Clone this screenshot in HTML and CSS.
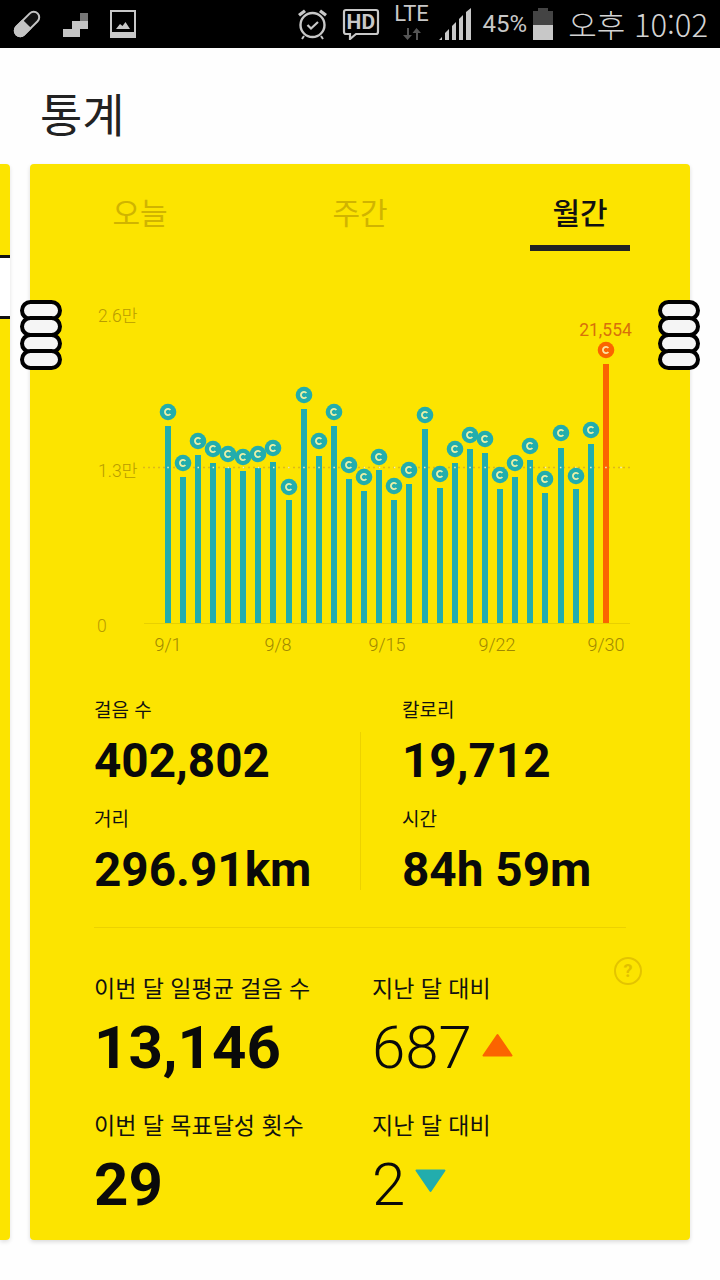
FILE: index.html
```html
<!DOCTYPE html>
<html lang="ko">
<head>
<meta charset="utf-8">
<title>통계</title>
<link rel="stylesheet" href="styles.css">
</head>
<body>
<div class="screen">
  <div class="status">
    <div class="status-left">
      <svg class="ic-pill" viewBox="0 0 28 28"><g transform="rotate(-45 14 14)"><rect x="-1" y="8.5" width="30" height="11" rx="5.5" fill="#111" stroke="#c4c4c4" stroke-width="2"/><path d="M14 7.5H4.500A6.500 6.500 0 0 0 4.500 20.500H14Z" fill="#c4c4c4"/></g></svg>
      <svg class="ic-steps" viewBox="0 0 25 24"><path d="M17 0h8v8h-8z" fill="#777"/><path d="M9 8h16v8H17v8H0v-8h9z" fill="#c4c4c4"/></svg>
      <svg class="ic-pic" viewBox="0 0 26 28"><rect x="1" y="1" width="24" height="26" fill="none" stroke="#c8c8c8" stroke-width="2"/><rect x="1" y="22" width="24" height="5" fill="#c8c8c8"/><path d="M6 19l4-5 2.500 2 3-4 4.500 7z" fill="#c8c8c8"/></svg>
    </div>
    <div class="status-right">
      <svg class="ic-alarm" viewBox="0 0 31 32"><circle cx="15.500" cy="17" r="12" fill="none" stroke="#c8c8c8" stroke-width="2.400"/><path d="M10.500 17l3.500 3.500 7-6.500" fill="none" stroke="#c8c8c8" stroke-width="2.200"/><path d="M1 6l6-4.500 2 2.500-6 4.500zM30 6l-6-4.500-2 2.500 6 4.500z" fill="#c8c8c8"/><path d="M7 28l-2 3M24 28l2 3" stroke="#c8c8c8" stroke-width="2"/></svg>
      <span class="ic-hd"><svg class="hd-shape" viewBox="0 0 38 32"><path d="M4 2h30a2 2 0 0 1 2 2v20a2 2 0 0 1-2 2H14l-6 5v-5H4a2 2 0 0 1-2-2V4a2 2 0 0 1 2-2z" fill="none" stroke="#c8c8c8" stroke-width="2.200"/></svg><span class="hd-text">HD</span></span>
      <span class="ic-lte"><span class="lte-text">LTE</span><svg class="lte-arrows" viewBox="0 0 18 12"><path d="M4 12V5H0l4.500-5L9 5H6v7z" transform="matrix(1 0 0 -1 0 12)" fill="#555"/><path d="M13 12V5H9.500L13.500 0 18 5h-3v7z" fill="#555"/></svg></span>
      <svg class="ic-signal" viewBox="0 0 32 32"><path d="M0 32L3 29V32zM6 32V25L10 21V32zM13 32V18L17 14V32zM20 32V11L24 7V32zM27 32V4L32 0V32z" fill="#c8c8c8"/></svg>
      <span class="pct">45%</span>
      <svg class="ic-batt" viewBox="0 0 20 32"><path d="M5 0h10v3h5v14H0V3h5z" fill="#444"/><path d="M0 17h20v15H0z" fill="#c8c8c8"/></svg>
      <span class="clock">오후 10:02</span>
    </div>
  </div>

  <h1 class="title">통계</h1>

  <div class="carousel">
    <div class="peek">
      <div class="peek-top"></div>
      <div class="peek-mid"></div>
      <div class="peek-bottom"></div>
    </div>
    <section class="card">
      <div class="tabs">
        <div class="tab">오늘</div>
        <div class="tab">주간</div>
        <div class="tab tab-on">월간<span class="tab-bar"></span></div>
      </div>

      <svg class="chart" viewBox="30 290 660 370" width="660" height="370">
        <defs>
          <g id="coin"><circle r="8.300" fill="#22adad"/><path d="M2.400-2A3.100 3.100 0 1 0 2.400 2" fill="none" stroke="#e9f0a8" stroke-width="1.800"/></g>
          <g id="coin-hot"><circle r="8.300" fill="#fb6400"/><path d="M2.400-2A3.100 3.100 0 1 0 2.400 2" fill="none" stroke="#fbe3a0" stroke-width="1.800"/></g>
        </defs>
        <text class="axis" x="98" y="322">2.6만</text>
        <text class="axis" x="98" y="477">1.3만</text>
        <text class="axis" x="97" y="632">0</text>
        <line class="base" x1="144" y1="623.500" x2="630" y2="623.500"/>
        <line class="avg" x1="143" y1="467.500" x2="632" y2="467.500"/>
        <g class="bars">
          <rect x="165" y="426" width="6" height="197"/>
          <rect x="180" y="477" width="6" height="146"/>
          <rect x="195" y="455" width="6" height="168"/>
          <rect x="210" y="463" width="6" height="160"/>
          <rect x="225" y="468" width="6" height="155"/>
          <rect x="240" y="471" width="6" height="152"/>
          <rect x="255" y="468" width="6" height="155"/>
          <rect x="270" y="462" width="6" height="161"/>
          <rect x="286" y="500" width="6" height="123"/>
          <rect x="301" y="409" width="6" height="214"/>
          <rect x="316" y="456" width="6" height="167"/>
          <rect x="331" y="426" width="6" height="197"/>
          <rect x="346" y="479" width="6" height="144"/>
          <rect x="361" y="491" width="6" height="132"/>
          <rect x="376" y="470" width="6" height="153"/>
          <rect x="391" y="500" width="6" height="123"/>
          <rect x="406" y="484" width="6" height="139"/>
          <rect x="422" y="429" width="6" height="194"/>
          <rect x="437" y="488" width="6" height="135"/>
          <rect x="452" y="463" width="6" height="160"/>
          <rect x="467" y="449" width="6" height="174"/>
          <rect x="482" y="453" width="6" height="170"/>
          <rect x="497" y="489" width="6" height="134"/>
          <rect x="512" y="477" width="6" height="146"/>
          <rect x="527" y="460" width="6" height="163"/>
          <rect x="542" y="493" width="6" height="130"/>
          <rect x="558" y="448" width="6" height="175"/>
          <rect x="573" y="489" width="6" height="134"/>
          <rect x="588" y="444" width="6" height="179"/>
          <rect class="bar-hot" x="603" y="364" width="6" height="259"/>
        </g>
        <line class="avg-dots" x1="167.300" y1="467.500" x2="632" y2="467.500"/>
        <use href="#coin" x="168" y="412"/>
        <use href="#coin" x="183" y="463"/>
        <use href="#coin" x="198" y="441"/>
        <use href="#coin" x="213" y="449"/>
        <use href="#coin" x="228" y="454"/>
        <use href="#coin" x="243" y="457"/>
        <use href="#coin" x="258" y="454"/>
        <use href="#coin" x="273" y="448"/>
        <use href="#coin" x="289" y="487"/>
        <use href="#coin" x="304" y="395"/>
        <use href="#coin" x="319" y="441"/>
        <use href="#coin" x="334" y="412"/>
        <use href="#coin" x="349" y="465"/>
        <use href="#coin" x="364" y="477"/>
        <use href="#coin" x="379" y="457"/>
        <use href="#coin" x="394" y="486"/>
        <use href="#coin" x="409" y="470"/>
        <use href="#coin" x="425" y="415"/>
        <use href="#coin" x="440" y="474"/>
        <use href="#coin" x="455" y="449"/>
        <use href="#coin" x="470" y="435"/>
        <use href="#coin" x="485" y="439"/>
        <use href="#coin" x="500" y="475"/>
        <use href="#coin" x="515" y="463"/>
        <use href="#coin" x="530" y="446"/>
        <use href="#coin" x="545" y="479"/>
        <use href="#coin" x="561" y="433"/>
        <use href="#coin" x="576" y="476"/>
        <use href="#coin" x="591" y="430"/>
        <use href="#coin-hot" x="606" y="350"/>
        <text class="peak" x="605.500" y="336">21,554</text>
        <text class="date" x="168" y="651">9/1</text>
        <text class="date" x="278" y="651">9/8</text>
        <text class="date" x="387" y="651">9/15</text>
        <text class="date" x="497" y="651">9/22</text>
        <text class="date" x="606" y="651">9/30</text>
      </svg>

      <div class="stats">
        <div class="stat-col">
          <div class="label-sm">걸음 수</div>
          <div class="value-md">402,802</div>
          <div class="label-sm label-next">거리</div>
          <div class="value-md">296.91km</div>
        </div>
        <div class="stat-divider"></div>
        <div class="stat-col stat-col-right">
          <div class="label-sm">칼로리</div>
          <div class="value-md">19,712</div>
          <div class="label-sm label-next">시간</div>
          <div class="value-md">84h 59m</div>
        </div>
      </div>

      <div class="rule"></div>

      <div class="help">?</div>

      <div class="summary">
        <div class="sum-cell">
          <div class="label-lg">이번 달 일평균 걸음 수</div>
          <div class="value-lg">13,146</div>
        </div>
        <div class="sum-cell">
          <div class="label-lg">지난 달 대비</div>
          <div class="value-thin">687<svg class="tri tri-up" viewBox="0 0 31 24"><path d="M15.500 2L29.500 22.500H1.500Z" fill="#fb6400" stroke="#fb6400" stroke-width="2" stroke-linejoin="round"/></svg></div>
        </div>
        <div class="sum-cell">
          <div class="label-lg">이번 달 목표달성 횟수</div>
          <div class="value-lg">29</div>
        </div>
        <div class="sum-cell">
          <div class="label-lg">지난 달 대비</div>
          <div class="value-thin">2<svg class="tri tri-down" viewBox="0 0 31 24"><path d="M15.500 22L29.500 1.500H1.500Z" fill="#22adad" stroke="#22adad" stroke-width="2" stroke-linejoin="round"/></svg></div>
        </div>
      </div>
    </section>
  </div>

  <div class="handle handle-left"><span></span><span></span><span></span><span></span></div>
  <div class="handle handle-right"><span></span><span></span><span></span><span></span></div>
</div>
</body>
</html>
```

FILE: styles.css
```css
* { box-sizing: border-box; }
html, body { margin: 0; padding: 0; background: #fff; }
body {
  font-family: "Noto Sans CJK KR", "Roboto", sans-serif;
  color: #111;
}
.screen { position: relative; width: 720px; height: 1280px; overflow: hidden; background: #fefefe; }

/* status bar */
.status {
  display: flex;
  justify-content: space-between;
  align-items: center;
  height: 48px;
  background: #000;
  padding: 0 12px 0 13px;
}
.status-left { display: flex; align-items: center; gap: 22px; }
.status-right { display: flex; align-items: center; }
.ic-pill { width: 28px; height: 28px; }
.ic-steps { width: 25px; height: 24px; margin-top: 1px; }
.ic-pic { width: 26px; height: 28px; }
.ic-alarm { width: 31px; height: 32px; }
.ic-hd { position: relative; width: 38px; height: 32px; margin-left: 14px; }
.hd-shape { display: block; width: 38px; height: 32px; }
.hd-text {
  position: absolute;
  left: 5px;
  top: 2px;
  font: 700 21px/24px "Roboto", sans-serif;
  color: #c8c8c8;
}
.ic-lte { display: flex; flex-direction: column; align-items: center; width: 36px; margin-left: 14px; }
.lte-text { font: 400 22px/20px "Roboto", sans-serif; color: #c8c8c8; height: 24px; margin-top: -4px; }
.lte-arrows { width: 18px; height: 12px; }
.ic-signal { width: 32px; height: 32px; margin-left: 9px; }
.pct { font: 400 24px/30px "Roboto", sans-serif; color: #c8c8c8; margin-left: 12px; }
.ic-batt { width: 20px; height: 32px; margin-left: 6px; }
.clock {
  font: 300 31px/40px "Noto Sans CJK KR", "Roboto", sans-serif;
  color: #d4d4d4;
  margin-left: 15px;
  white-space: nowrap;
}

/* title */
.title {
  margin: 0;
  height: 116px;
  padding: 33px 0 0 40px;
  font: 400 46px/62px "Noto Sans CJK KR", sans-serif;
  color: #222;
}

/* cards */
.carousel { display: flex; gap: 20px; height: 1076px; }
.peek {
  display: flex;
  flex-direction: column;
  width: 10px;
  border-radius: 0 4px 4px 0;
  overflow: hidden;
  box-shadow: 0 2px 4px rgba(0, 0, 0, .12);
}
.peek-top { height: 91px; background: #fce400; }
.peek-mid { height: 64px; background: #fff; border-top: 3px solid #111; border-bottom: 3px solid #111; }
.peek-bottom { flex: 1; background: #fce400; }
.card {
  position: relative;
  width: 660px;
  height: 1076px;
  background: #fce400;
  border-radius: 4px;
  box-shadow: 0 2px 4px rgba(0, 0, 0, .14);
}

/* tabs */
.tabs { display: grid; grid-template-columns: repeat(3, 220px); height: 126px; }
.tab {
  display: flex;
  flex-direction: column;
  align-items: center;
  padding-top: 27px;
  font: 400 30px/40px "Noto Sans CJK KR", sans-serif;
  color: #d0b400;
}
.tab-on { color: #111; font-weight: 500; }
.tab-bar { display: block; width: 100px; height: 6px; margin-top: 14px; background: #222; }

/* chart */
.chart { display: block; font-family: "Roboto", "Noto Sans CJK KR", sans-serif; }
.axis { font-size: 17.500px; font-weight: 300; fill: #b89c00; }
.date { font-size: 18px; font-weight: 300; fill: #a08800; text-anchor: middle; }
.peak { font-size: 17.500px; fill: #d8700a; text-anchor: middle; }
.base { stroke: #e8d000; stroke-width: 1; }
.avg { stroke: #dcb81a; stroke-width: 1.500; stroke-dasharray: 2 3; }
.avg-dots { stroke: #f0f0c0; stroke-width: 1.500; stroke-dasharray: 1.500 13.600; }
.bars rect { fill: #22adad; }
.bars .bar-hot { fill: #fb6400; }

/* stats */
.stats { display: grid; grid-template-columns: 266px 1px 1fr; margin-top: 35px; padding-left: 64px; }
.stat-col { display: flex; flex-direction: column; }
.stat-col-right { padding-left: 41px; }
.stat-divider { margin: 37px 0 10px; background: #ecd200; }
.label-sm { font: 400 19px/28px "Noto Sans CJK KR", sans-serif; color: #111; }
.label-next { margin-top: 13px; }
.value-md {
  margin-top: 8px;
  font: 700 47.700px/60px "Roboto", sans-serif;
  color: #0a0a0a;
  white-space: nowrap;
}
.rule { height: 1px; margin: 27px 64px 0; background: #ecd200; }

.help {
  position: absolute;
  top: 793px;
  right: 48px;
  width: 28px;
  height: 28px;
  border: 2px solid #e3c400;
  border-radius: 50%;
  font: 700 18px/24px "Roboto", sans-serif;
  color: #e0c000;
  text-align: center;
}

.summary {
  display: grid;
  grid-template-columns: 278px 1fr;
  row-gap: 25px;
  margin-top: 43px;
  padding-left: 64px;
}
.label-lg { font: 400 23px/32px "Noto Sans CJK KR", sans-serif; color: #111; white-space: nowrap; }
.value-lg {
  margin-top: 10px;
  font: 700 60px/70px "Roboto", sans-serif;
  color: #0a0a0a;
}
.value-thin {
  display: flex;
  align-items: flex-start;
  margin-top: 10px;
  font: 300 60px/70px "Roboto", sans-serif;
  color: #0a0a0a;
}
.tri { width: 31px; height: 24px; margin-left: 10px; }
.tri-up { margin-top: 20px; }
.tri-down { margin-top: 19px; }

/* overlay handles */
.handle { position: absolute; top: 300px; display: flex; flex-direction: column; width: 42px; }
.handle-left { left: 20px; }
.handle-right { left: 658px; }
.handle span {
  display: block;
  height: 21px;
  background: #f5f5f5;
  border: 4.500px solid #000;
  border-radius: 11px;
}
.handle span + span { margin-top: -4.600px; }
```
